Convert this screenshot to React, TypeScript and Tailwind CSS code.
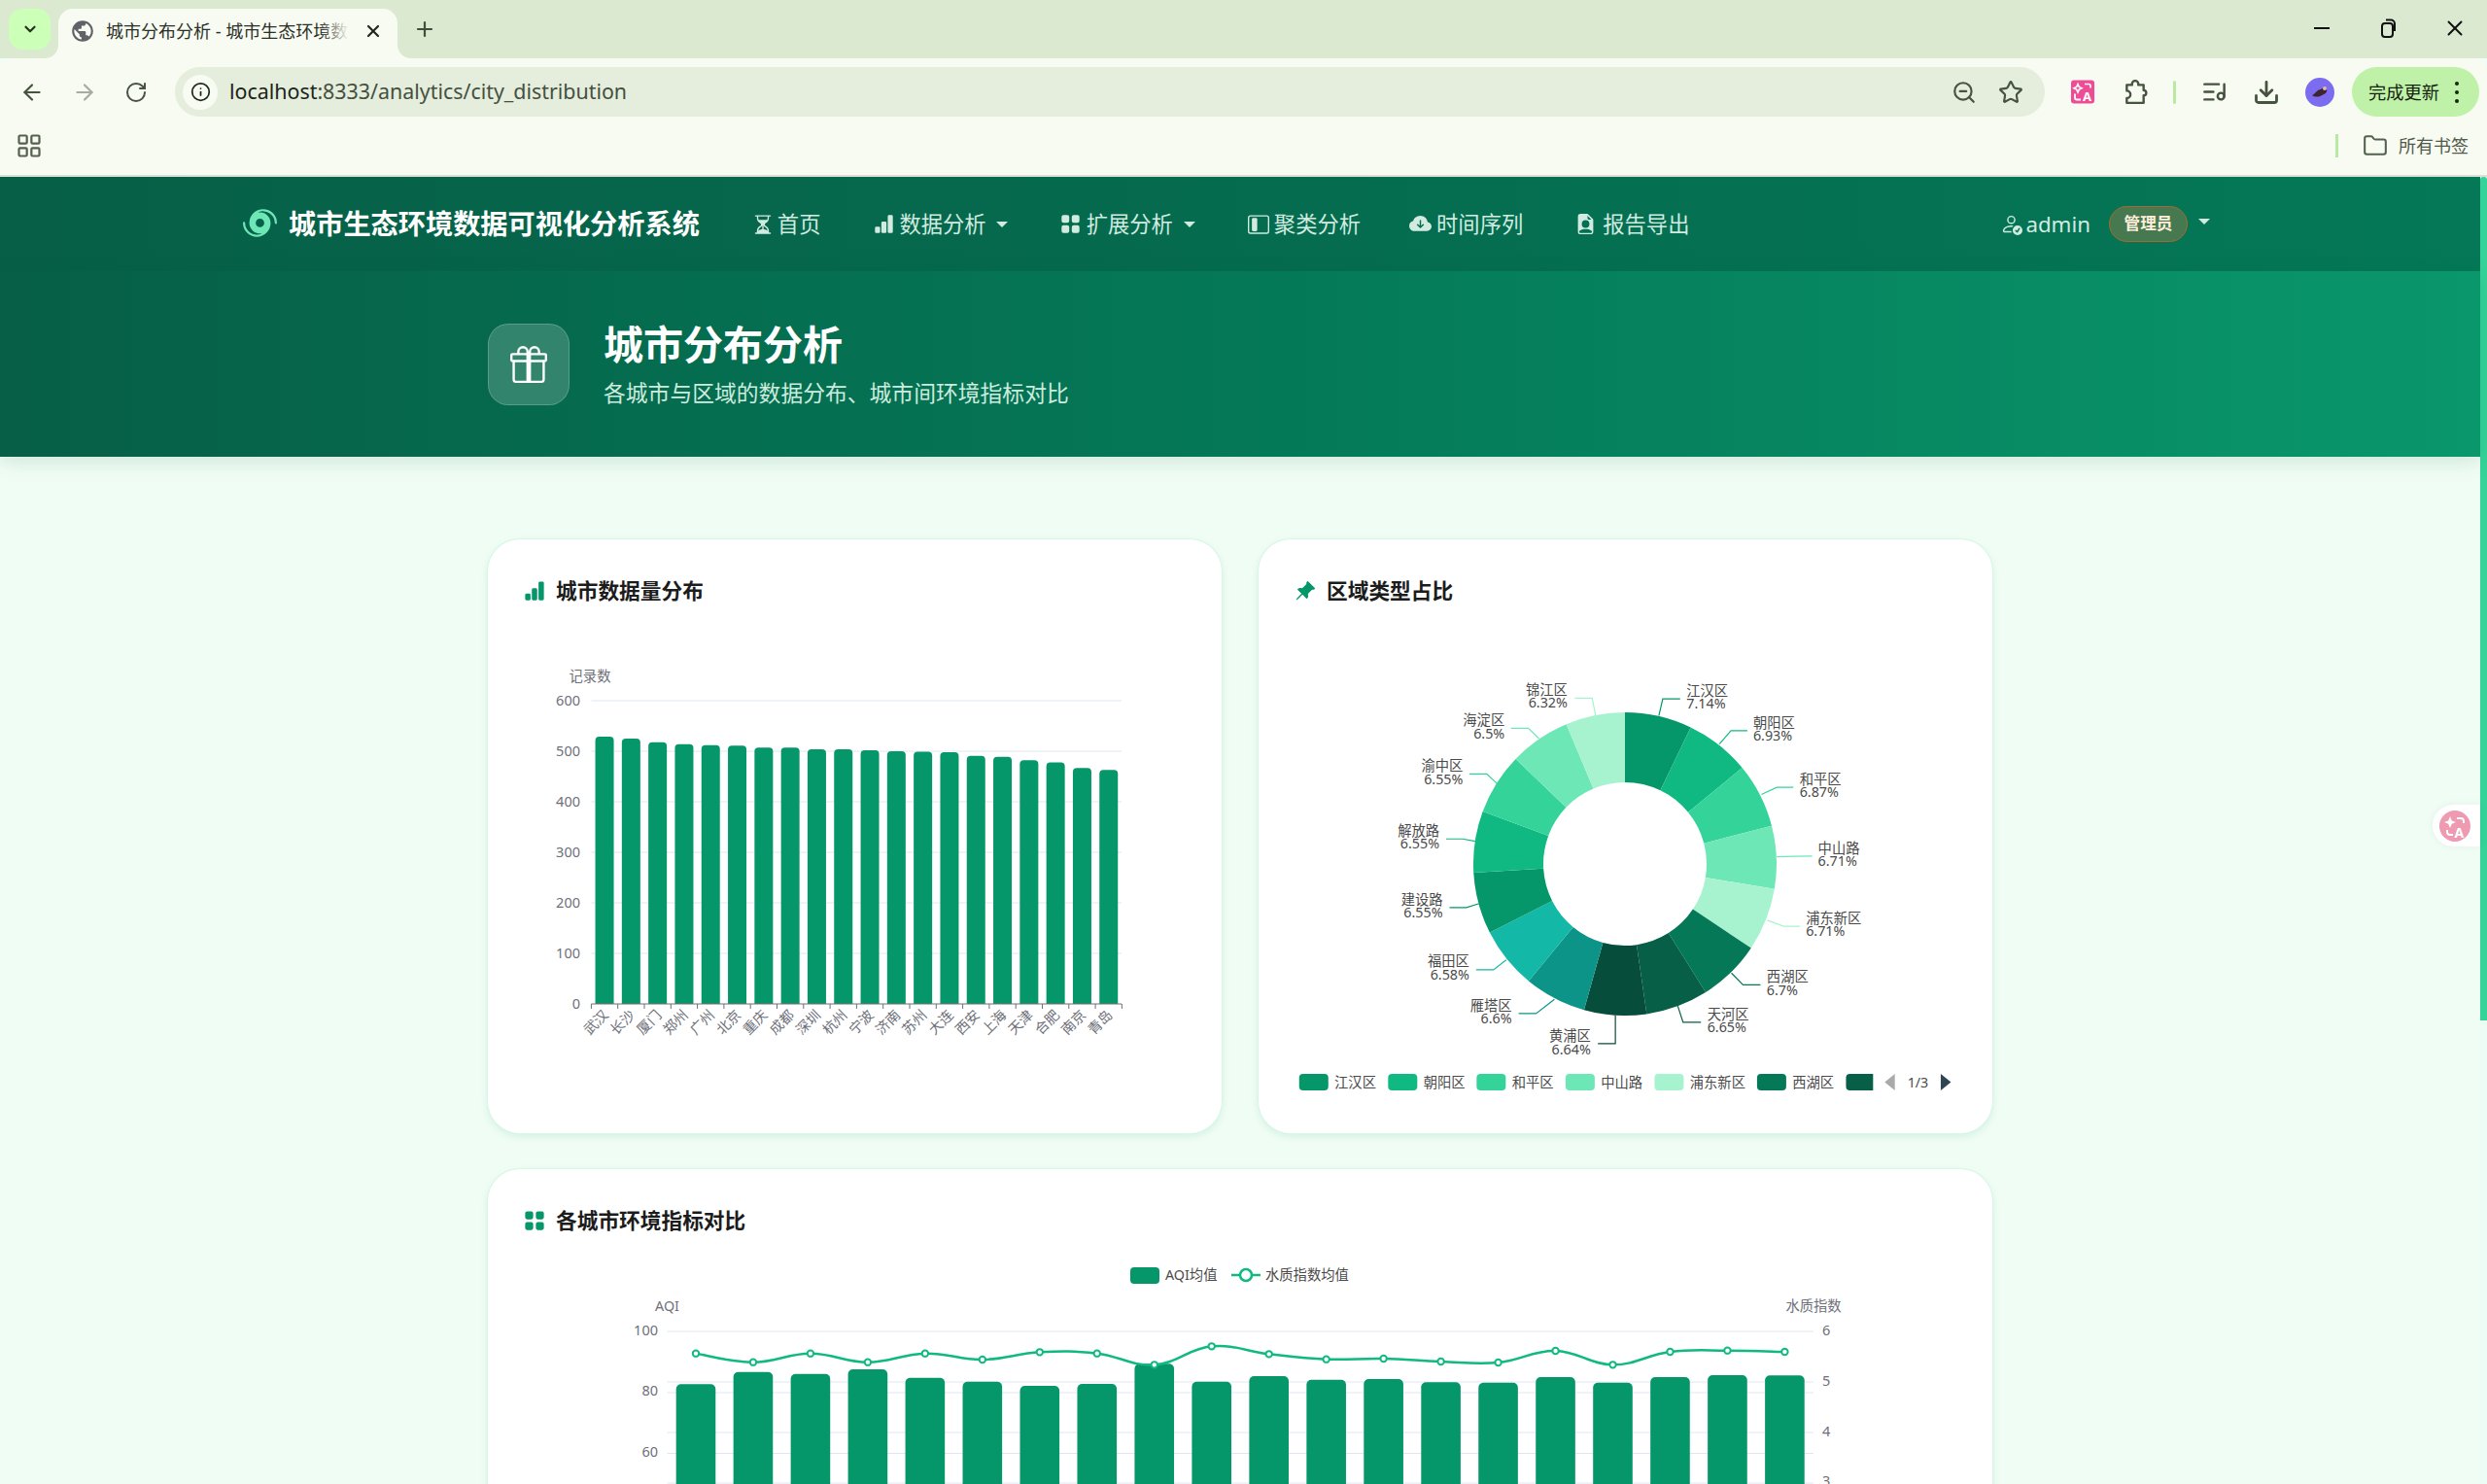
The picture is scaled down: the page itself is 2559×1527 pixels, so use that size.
import {
  ArrowLeft,
  ArrowRight,
  ChevronDown,
  Download,
  Folder,
  Info,
  LayoutGrid,
  ListMusic,
  Plus,
  RotateCw,
  Star,
  X,
  ZoomOut,
} from 'lucide-react';
import {
  BsBarChartFill,
  BsCloudArrowDownFill,
  BsFileEarmarkPersonFill,
  BsGift,
  BsGridFill,
  BsHourglassSplit,
  BsHurricane,
  BsLayoutSidebarInset,
  BsPersonCheck,
  BsPinAngleFill,
} from 'react-icons/bs';
import { MdPublic } from 'react-icons/md';

const cities = ['武汉', '长沙', '厦门', '郑州', '广州', '北京', '重庆', '成都', '深圳', '杭州', '宁波', '济南', '苏州', '大连', '西安', '上海', '天津', '合肥', '南京', '青岛'];
const cityValues = [529, 525, 518, 514, 512, 511, 507, 507, 504, 504, 502, 500, 499, 498, 491, 489, 482, 478, 467, 463];

const slices = [
  { value: 7.14, color: '#059669' },
  { value: 6.93, color: '#10b981' },
  { value: 6.87, color: '#34d399' },
  { value: 6.71, color: '#6ee7b7' },
  { value: 6.71, color: '#a7f3d0' },
  { value: 6.7, color: '#047857' },
  { value: 6.65, color: '#065f46' },
  { value: 6.64, color: '#064e3b' },
  { value: 6.6, color: '#0d9488' },
  { value: 6.58, color: '#14b8a6' },
  { value: 6.55, color: '#059669' },
  { value: 6.55, color: '#10b981' },
  { value: 6.55, color: '#34d399' },
  { value: 6.5, color: '#6ee7b7' },
  { value: 6.32, color: '#a7f3d0' },
];

// label positions read off the pie chart: zx/zy are crop coordinates, converted by px() and py()
const px = (z: number) => 1290 + z / 2.01;
const py = (z: number) => 540 + z / 2.45;

const pieLabels = [
  { name: '江汉区', pct: '7.14%', x: 895, y1: 418, y2: 452, end: false, c: 0, line: [[838, 481], [846, 439], [882, 439]] },
  { name: '朝阳区', pct: '6.93%', x: 1033, y1: 499, y2: 532, end: false, c: 1, line: [[963, 553], [987, 519], [1021, 519]] },
  { name: '和平区', pct: '6.87%', x: 1129, y1: 642, y2: 675, end: false, c: 2, line: [[1050, 680], [1082, 662], [1116, 662]] },
  { name: '中山路', pct: '6.71%', x: 1167, y1: 816, y2: 849, end: false, c: 3, line: [[1082, 837], [1118, 836], [1155, 835]] },
  { name: '浦东新区', pct: '6.71%', x: 1142, y1: 992, y2: 1025, end: false, c: 4, line: [[1062, 997], [1096, 1012], [1130, 1012]] },
  { name: '西湖区', pct: '6.7%', x: 1061, y1: 1139, y2: 1175, end: false, c: 5, line: [[988, 1130], [1012, 1160], [1048, 1160]] },
  { name: '天河区', pct: '6.65%', x: 938, y1: 1235, y2: 1268, end: false, c: 6, line: [[877, 1213], [888, 1254], [925, 1254]] },
  { name: '黄浦区', pct: '6.64%', x: 697, y1: 1289, y2: 1324, end: true, c: 7, line: [[748, 1237], [748, 1308], [712, 1308]] },
  { name: '雁塔区', pct: '6.6%', x: 534, y1: 1213, y2: 1246, end: true, c: 8, line: [[622, 1196], [584, 1232], [548, 1232]] },
  { name: '福田区', pct: '6.58%', x: 446, y1: 1100, y2: 1135, end: true, c: 9, line: [[522, 1097], [496, 1122], [460, 1122]] },
  { name: '建设路', pct: '6.55%', x: 391, y1: 945, y2: 979, end: true, c: 10, line: [[466, 955], [440, 965], [405, 965]] },
  { name: '解放路', pct: '6.55%', x: 384, y1: 771, y2: 805, end: true, c: 11, line: [[458, 798], [432, 792], [398, 792]] },
  { name: '渝中区', pct: '6.55%', x: 433, y1: 607, y2: 643, end: true, c: 12, line: [[503, 652], [482, 628], [446, 628]] },
  { name: '海淀区', pct: '6.5%', x: 519, y1: 492, y2: 527, end: true, c: 13, line: [[590, 539], [568, 513], [532, 513]] },
  { name: '锦江区', pct: '6.32%', x: 649, y1: 417, y2: 450, end: true, c: 14, line: [[707, 480], [700, 437], [664, 437]] },
];

const pieLegend = [
  { name: '江汉区', sx: 94, tx: 167, color: '#059669' },
  { name: '朝阳区', sx: 278, tx: 351, color: '#10b981' },
  { name: '和平区', sx: 461, tx: 534, color: '#34d399' },
  { name: '中山路', sx: 645, tx: 718, color: '#6ee7b7' },
  { name: '浦东新区', sx: 829, tx: 902, color: '#a7f3d0' },
  { name: '西湖区', sx: 1041, tx: 1114, color: '#047857' },
];

// bar tops and line points of the comparison chart, in page y
const compareBars = [703, 665, 671, 657, 683, 695, 708, 702, 640, 695, 678, 689, 687, 697, 698, 681, 698, 681, 675, 676].map((z) => 1190 + z / 3);
const compareLine = [608, 635, 608, 635, 608, 627, 604, 608, 643, 586, 610, 626, 624, 633, 636, 600, 643, 603, 599, 603].map((z) => 1190 + z / 3);

function donutSlice(start: number, end: number, r0: number, r1: number, cx: number, cy: number) {
  const a0 = (start / 100) * Math.PI * 2 - Math.PI / 2;
  const a1 = (end / 100) * Math.PI * 2 - Math.PI / 2;
  const p = (r: number, a: number) => `${cx + r * Math.cos(a)} ${cy + r * Math.sin(a)}`;
  return `M${p(r1, a0)}A${r1} ${r1} 0 0 1 ${p(r1, a1)}L${p(r0, a1)}A${r0} ${r0} 0 0 0 ${p(r0, a0)}Z`;
}

function smoothPath(points: number[][]) {
  let d = `M${points[0][0]} ${points[0][1]}`;
  for (let i = 0; i < points.length - 1; i++) {
    const p0 = points[Math.max(i - 1, 0)];
    const p1 = points[i];
    const p2 = points[i + 1];
    const p3 = points[Math.min(i + 2, points.length - 1)];
    const c1x = p1[0] + (p2[0] - p0[0]) * 0.2;
    const c1y = p1[1] + (p2[1] - p0[1]) * 0.2;
    const c2x = p2[0] - (p3[0] - p1[0]) * 0.2;
    const c2y = p2[1] - (p3[1] - p1[1]) * 0.2;
    d += `C${c1x} ${c1y} ${c2x} ${c2y} ${p2[0]} ${p2[1]}`;
  }
  return d;
}

function TabFlare({ side }: { side: 'left' | 'right' }) {
  return (
    <svg
      viewBox="0 0 14 14"
      className={`absolute bottom-0 w-[14px] h-[14px] ${side === 'left' ? 'left-[-14px]' : 'right-[-14px] -scale-x-100'}`}
    >
      <path d="M14 0v14H0a14 14 0 0 0 14-14z" fill="#f8fbf2" />
    </svg>
  );
}

function BrowserChrome() {
  return (
    <div className="flex flex-col shrink-0">
      {/* Tab strip */}
      <div className="h-[60px] bg-[#dbe9d0] flex items-end relative">
        <div className="ml-[9px] mb-[9px] w-[43px] h-[42px] rounded-[14px] bg-[#ccffb8] flex items-center justify-center text-[#26331f]">
          <ChevronDown size={18} strokeWidth={3} />
        </div>
        <div className="relative ml-[8px] w-[349px] h-[51px] rounded-t-[15px] bg-[#f8fbf2] flex items-center pl-[12px] pb-[5px]">
          <TabFlare side="left" />
          <TabFlare side="right" />
          <MdPublic size={26} className="text-[#5f6368] shrink-0" />
          <div className="relative ml-[11px] w-[250px] overflow-hidden whitespace-nowrap text-[18px] text-[#2a2f28]">
            城市分布分析 - 城市生态环境数据可视化
            <div className="absolute right-0 top-0 bottom-0 w-[30px] bg-linear-to-l from-[#f8fbf2] to-transparent" />
          </div>
          <X size={20} strokeWidth={2.6} className="ml-[15px] text-[#1f2a1e] shrink-0" />
        </div>
        <Plus size={24} strokeWidth={2.2} className="ml-[16px] mb-[18px] text-[#3f4f3c]" />
        <div className="flex-1" />
        <div className="h-[60px] flex items-center gap-[44px] pr-[20px] pb-[2px] text-[#111]">
          <div className="w-[16px] h-[2.5px] bg-[#111] mx-[4px]" />
          <svg viewBox="0 0 24 24" className="w-[24px] h-[24px]" fill="none" stroke="#111" strokeWidth="2">
            <rect x="6" y="7" width="11" height="14" rx="3" />
            <path d="M10 3.5h5a4 4 0 0 1 4 4V15" />
          </svg>
          <X size={26} strokeWidth={1.8} />
        </div>
      </div>

      {/* Toolbar */}
      <div className="h-[60px] bg-[#f8fbf2] rounded-tl-[12px] rounded-tr-[12px] flex items-start pt-[9px] text-[#45533f]">
        <div className="w-[180px] h-[51px] flex items-center pl-[20px] gap-[28px]">
          <ArrowLeft size={26} strokeWidth={2} />
          <ArrowRight size={26} strokeWidth={2} className="text-[#a6aca1]" />
          <RotateCw size={24} strokeWidth={2} />
        </div>
        <div className="w-[1924px] h-[51px] rounded-full bg-[#e5eddc] flex items-center pl-[8px] pr-[22px]">
          <div className="w-[36px] h-[36px] rounded-full bg-[#f8fbf2] flex items-center justify-center text-[#1f2a1e]">
            <Info size={21} strokeWidth={2} />
          </div>
          <div className="ml-[12px] mb-[2px] text-[21.4px] leading-none text-[#44503f] whitespace-nowrap">
            <span className="text-[#1b2419]">localhost</span>:8333/analytics/city_distribution
          </div>
          <div className="flex-1" />
          <ZoomOut size={26} strokeWidth={2} />
          <Star size={26} strokeWidth={2} className="ml-[22px]" />
        </div>
        <div className="h-[51px] flex items-center">
          <svg viewBox="0 0 24 24" className="ml-[27px] w-[24px] h-[25px]">
            <rect width="24" height="24" rx="3" fill="#ee4d95" />
            <path d="M7 4l1.3 3L11 8.300 8.300 9.600 7 12.500 5.700 9.600 3 8.300 5.700 7zM14 4h4a2 2 0 0 1 2 2v2" fill="none" stroke="#fff" strokeWidth="1.600" />
            <path d="M4 14v4a2 2 0 0 0 2 2h4" fill="none" stroke="#fff" strokeWidth="1.800" />
            <text x="12" y="21" fontSize="13" fontWeight="700" fill="#fff">A</text>
          </svg>
          <svg viewBox="0 0 24 24" className="ml-[29px] w-[26px] h-[26px]" fill="none" stroke="#45533f" strokeWidth="2.200" strokeLinejoin="round">
            <path d="M4 5h5V4a3 3 0 0 1 6 0v1h5v5a2.500 2.500 0 0 1 0 5v7H4v-4.500a3.500 3.500 0 0 0 0-7z" />
          </svg>
          <div className="ml-[26px] w-[3px] h-[24px] bg-[#b9e9a2] rounded-full" />
          <ListMusic size={27} strokeWidth={2.2} className="ml-[26px]" />
          <Download size={28} strokeWidth={2.4} className="ml-[26px]" />
          <svg viewBox="0 0 30 30" className="ml-[26px] w-[30px] h-[30px]">
            <circle cx="15" cy="15" r="15" fill="#7c6cf0" />
            <path d="M7 18c3-1 5-6 9-6 2-2 5-2 6 0 1 3-2 5-5 6-3 2-7 2-10 0z" fill="#3d2430" />
            <circle cx="20" cy="11" r="2" fill="#e8b9a8" />
          </svg>
          <div className="ml-[18px] w-[131px] h-[51px] rounded-full bg-[#bff2a8] flex items-center pl-[17px] text-[18.3px] text-[#16230f] whitespace-nowrap">
            完成更新
            <div className="ml-[16px] flex flex-col gap-[5px]">
              <div className="w-[4px] h-[4px] rounded-full bg-[#16230f]" />
              <div className="w-[4px] h-[4px] rounded-full bg-[#16230f]" />
              <div className="w-[4px] h-[4px] rounded-full bg-[#16230f]" />
            </div>
          </div>
        </div>
      </div>

      {/* Bookmarks bar */}
      <div className="h-[62px] bg-[#f8fbf2] border-b-2 border-[#dcdfd3] flex items-center pl-[16px] text-[#55614f]">
        <LayoutGrid size={28} strokeWidth={1.9} />
        <div className="flex-1" />
        <div className="w-[3px] h-[24px] bg-[#b9e9a2]" />
        <Folder size={26} strokeWidth={1.9} className="ml-[25px]" />
        <span className="ml-[11px] mr-[19px] text-[18px] text-[#4f5a4b]">所有书签</span>
      </div>
    </div>
  );
}

function TopNav() {
  return (
    <nav className="h-[97px] shrink-0 bg-linear-to-r from-[#065f46] to-[#047857] flex items-center pl-[250px] pr-[278px] text-[#d1ebe0]">
      <BsHurricane size={35} className="text-[#6ee7b7]" />
      <span className="ml-[12px] text-[28.2px] font-bold text-white whitespace-nowrap">城市生态环境数据可视化分析系统</span>
      <div className="ml-[54px] flex items-center text-[22.3px] whitespace-nowrap">
        <div className="flex items-center gap-[4px]">
          <BsHourglassSplit size={22} />
          首页
        </div>
        <div className="ml-[55px] flex items-center gap-[5px]">
          <BsBarChartFill size={21} />
          数据分析
          <div className="ml-[5px] w-0 h-0 border-x-[6px] border-x-transparent border-t-[6px] border-t-[#d1ebe0]" />
        </div>
        <div className="ml-[54px] flex items-center gap-[6px]">
          <BsGridFill size={21} />
          扩展分析
          <div className="ml-[5px] w-0 h-0 border-x-[6px] border-x-transparent border-t-[6px] border-t-[#d1ebe0]" />
        </div>
        <div className="ml-[54px] flex items-center gap-[5px]">
          <BsLayoutSidebarInset size={22} />
          聚类分析
        </div>
        <div className="ml-[50px] flex items-center gap-[5px]">
          <BsCloudArrowDownFill size={23} />
          时间序列
        </div>
        <div className="ml-[54px] flex items-center gap-[7px]">
          <BsFileEarmarkPersonFill size={21} />
          报告导出
        </div>
      </div>
      <div className="flex-1" />
      <div className="flex items-center whitespace-nowrap">
        <BsPersonCheck size={23} />
        <span className="ml-[3px] text-[22.3px]">admin</span>
        <div className="ml-[19px] w-[81px] h-[37px] rounded-full bg-[#46794f] border border-[#a9692e] flex items-center justify-center text-[16.6px] font-bold text-[#fdeeda]">
          管理员
        </div>
        <div className="ml-[11px] mb-[6px] w-0 h-0 border-x-[6px] border-x-transparent border-t-[6px] border-t-[#d1ebe0]" />
      </div>
    </nav>
  );
}

function PageHeader() {
  return (
    <header className="h-[191px] shrink-0 bg-linear-to-r from-[#065f46] via-[#047857] to-[#0a976b] shadow-[0_4px_20px_rgba(6,95,70,0.15)] flex items-center pl-[502px] relative">
      <div className="w-[84px] h-[84px] rounded-[21px] bg-white/18 border border-white/20 flex items-center justify-center text-white">
        <BsGift size={38} />
      </div>
      <div className="ml-[35px] flex flex-col">
        <h1 className="text-[41px] leading-[50px] font-bold text-white">城市分布分析</h1>
        <p className="mt-[11px] text-[22.8px] leading-[30px] text-[#cdebde]">各城市与区域的数据分布、城市间环境指标对比</p>
      </div>
    </header>
  );
}

function CityBarChart() {
  const x0 = 608.4;
  const step = 27.3;
  const y0 = 1033;
  return (
    <svg viewBox="502 640 755 526" className="block w-[755px] h-[526px]">
      {[0, 100, 200, 300, 400, 500, 600].map((v) => {
        const y = y0 - v * 0.52;
        return (
          <g key={v}>
            {v > 0 && <line x1={x0} x2={1154} y1={y} y2={y} stroke="#e0e6f1" />}
            <text x={597} y={y - 1.5} textAnchor="end" dominantBaseline="central" fontSize="14.5" fill="#6e7079">{v}</text>
          </g>
        );
      })}
      <text x={607} y={695} textAnchor="middle" dominantBaseline="central" fontSize="14.3" fill="#6e7079">记录数</text>
      {cityValues.map((v, i) => {
        const h = v * 0.52;
        const x = x0 + step * i + (step - 19) / 2;
        const y = y0 - h;
        return (
          <path key={i} d={`M${x} ${y0}V${y + 4}a4 4 0 0 1 4-4h11a4 4 0 0 1 4 4V${y0}z`} fill="#059669" />
        );
      })}
      <line x1={x0} x2={1154} y1={y0} y2={y0} stroke="#6e7079" />
      {Array.from({ length: 21 }).map((_, i) => (
        <line key={i} x1={x0 + step * i} x2={x0 + step * i} y1={y0} y2={y0 + 5} stroke="#6e7079" />
      ))}
      {cities.map((c, i) => {
        const x = x0 + step * i + step / 2 + 1;
        return (
          <text key={c} x={x} y={1041.5} textAnchor="end" dominantBaseline="central" fontSize="14.3" fill="#6e7079" transform={`rotate(-45 ${x} 1041.5)`}>
            {c}
          </text>
        );
      })}
    </svg>
  );
}

function RegionPieChart() {
  let acc = 0;
  return (
    <svg viewBox="1295 640 755 526" className="block w-[755px] h-[526px]">
      {slices.map((s, i) => {
        const d = donutSlice(acc, acc + s.value, 84, 156, 1672, 889);
        acc += s.value;
        return <path key={i} d={d} fill={s.color} />;
      })}
      {pieLabels.map((l) => (
        <g key={l.name}>
          <polyline points={l.line.map(([a, b]) => `${px(a)},${py(b)}`).join(' ')} fill="none" stroke={slices[l.c].color} strokeWidth="1.200" />
          <text x={px(l.x)} y={py(l.y1) - 0.5} textAnchor={l.end ? 'end' : 'start'} dominantBaseline="central" fontSize="14.3" fill="#4a4a4a">{l.name}</text>
          <text x={px(l.x)} y={py(l.y2) - 1} textAnchor={l.end ? 'end' : 'start'} dominantBaseline="central" fontSize="14.3" fill="#4a4a4a">{l.pct}</text>
        </g>
      ))}
      {pieLegend.map((l) => (
        <g key={l.name}>
          <rect x={px(l.sx)} y={1105} width={30} height={17} rx={4} fill={l.color} />
          <text x={px(l.tx)} y={1113} dominantBaseline="central" fontSize="14.3" fill="#4a4a4a">{l.name}</text>
        </g>
      ))}
      <path d={`M${px(1225) + 4} 1105H${px(1281)}V1122H${px(1225) + 4}a4 4 0 0 1-4-4v-9a4 4 0 0 1 4-4z`} fill="#065f46" />
      <polygon points={`${px(1326)},1105 ${px(1326)},1122 ${px(1305)},1113.500`} fill="#aaaaaa" />
      <text x={px(1352)} y={1113} dominantBaseline="central" fontSize="14.3" fill="#4a4a4a">1/3</text>
      <polygon points={`${px(1421)},1105 ${px(1421)},1122 ${px(1442)},1113.500`} fill="#2f4554" />
    </svg>
  );
}

function CompareChart() {
  const x0 = 686.5;
  const step = 58.97;
  const bottom = 1680;
  const linePoints = compareLine.map((y, i) => [x0 + step * i + step / 2, y]);
  return (
    <svg viewBox="502 1288 1548 400" className="block w-[1548px] h-[400px]">
      {/* legend */}
      <rect x={1163} y={1304} width={30} height={17} rx={4} fill="#059669" />
      <text x={1199} y={1311} dominantBaseline="central" fontSize="14.3" fill="#4a4a4a">AQI均值</text>
      <line x1={1267} x2={1297} y1={1312} y2={1312} stroke="#10b981" strokeWidth="2.500" />
      <circle cx={1282} cy={1312} r={6} fill="#fff" stroke="#10b981" strokeWidth="2.500" />
      <text x={1302} y={1311} dominantBaseline="central" fontSize="14.3" fill="#4a4a4a">水质指数均值</text>

      <text x={686.5} y={1343} textAnchor="middle" dominantBaseline="central" fontSize="14.3" fill="#6e7079">AQI</text>
      <text x={1866} y={1343} textAnchor="middle" dominantBaseline="central" fontSize="14.3" fill="#6e7079">水质指数</text>
      {[1370, 1422, 1433, 1474, 1495.500, 1526].map((y) => (
        <line key={y} x1={x0} x2={1866} y1={y} y2={y} stroke="#e0e6f1" />
      ))}
      {[['100', 1368], ['80', 1430], ['60', 1493]].map(([t, y]) => (
        <text key={t} x={677} y={y} textAnchor="end" dominantBaseline="central" fontSize="14.5" fill="#6e7079">{t}</text>
      ))}
      {[['6', 1368], ['5', 1420], ['4', 1472], ['3', 1523]].map(([t, y]) => (
        <text key={t} x={1875} y={y} dominantBaseline="central" fontSize="14.5" fill="#6e7079">{t}</text>
      ))}
      {compareBars.map((y, i) => {
        const x = x0 + step * i + (step - 40.6) / 2;
        return <path key={i} d={`M${x} ${bottom}V${y + 5}a5 5 0 0 1 5-5h30.600a5 5 0 0 1 5 5V${bottom}z`} fill="#059669" />;
      })}
      <path d={smoothPath(linePoints)} fill="none" stroke="#10b981" strokeWidth="2.500" />
      {linePoints.map(([x, y], i) => (
        <circle key={i} cx={x} cy={y} r={3.200} fill="#fff" stroke="#10b981" strokeWidth="2" />
      ))}
    </svg>
  );
}

function ChartCard({ icon, title, wide, children }: { icon: React.ReactNode; title: string; wide?: boolean; children: React.ReactNode }) {
  return (
    <section className={`rounded-[33px] bg-white shadow-[0_0_0_1px_#d6f7e6,0_3px_8px_rgba(5,150,105,0.13)] ${wide ? 'col-span-2' : 'h-[611px]'}`}>
      <div className="pl-[37px] pt-[39px] h-[67px] flex items-center gap-[11px] text-[#059669]">
        {icon}
        <h2 className="text-[21.700px] leading-[28px] font-bold text-[#1c1c1c]">{title}</h2>
      </div>
      <div className="mt-[18px] overflow-hidden">{children}</div>
    </section>
  );
}

export default function App() {
  return (
    <div className="relative h-[1527px] w-full overflow-hidden flex flex-col bg-[#f0fdf4] font-['Noto_Sans','Noto_Sans_CJK_SC',sans-serif]">
      <BrowserChrome />
      <div className="flex-1 flex min-h-0">
        <div className="flex-1 min-w-0 flex flex-col">
          <TopNav />
          <PageHeader />
          <main className="pt-[85px] w-[1548px] mx-auto grid grid-cols-2 gap-x-[38px] gap-y-[37px]">
            <ChartCard icon={<BsBarChartFill size={22} />} title="城市数据量分布">
              <CityBarChart />
            </ChartCard>
            <ChartCard icon={<BsPinAngleFill size={22} />} title="区域类型占比">
              <RegionPieChart />
            </ChartCard>
            <ChartCard wide icon={<BsGridFill size={22} />} title="各城市环境指标对比">
              <CompareChart />
            </ChartCard>
          </main>
        </div>
        {/* Scrollbar */}
        <div className="w-[7px] shrink-0 bg-[#ecfdf5]">
          <div className="h-[868px] bg-[#34d399] rounded-t-[3px]" />
        </div>
      </div>

      {/* Floating translate button */}
      <div className="absolute left-[2503px] top-[828px] w-[49px] h-[43px] rounded-l-full bg-white flex items-center pl-[7px] shadow-[0_0_8px_rgba(0,0,0,0.05)]">
        <svg viewBox="0 0 32 32" className="w-[32px] h-[32px]">
          <circle cx="16" cy="16" r="16" fill="#ee9ab0" />
          <path d="M11 6l1.800 4.500L17 12l-4.200 1.800L11 18l-1.800-4.200L5 12l4.200-1.500z" fill="#fff" />
          <path d="M18 8h4a3 3 0 0 1 3 3v2M8 20v2a3 3 0 0 0 3 3h3" fill="none" stroke="#fff" strokeWidth="2" />
          <text x="15.500" y="28" fontSize="14" fontWeight="700" fill="#fff">A</text>
        </svg>
      </div>
    </div>
  );
}
